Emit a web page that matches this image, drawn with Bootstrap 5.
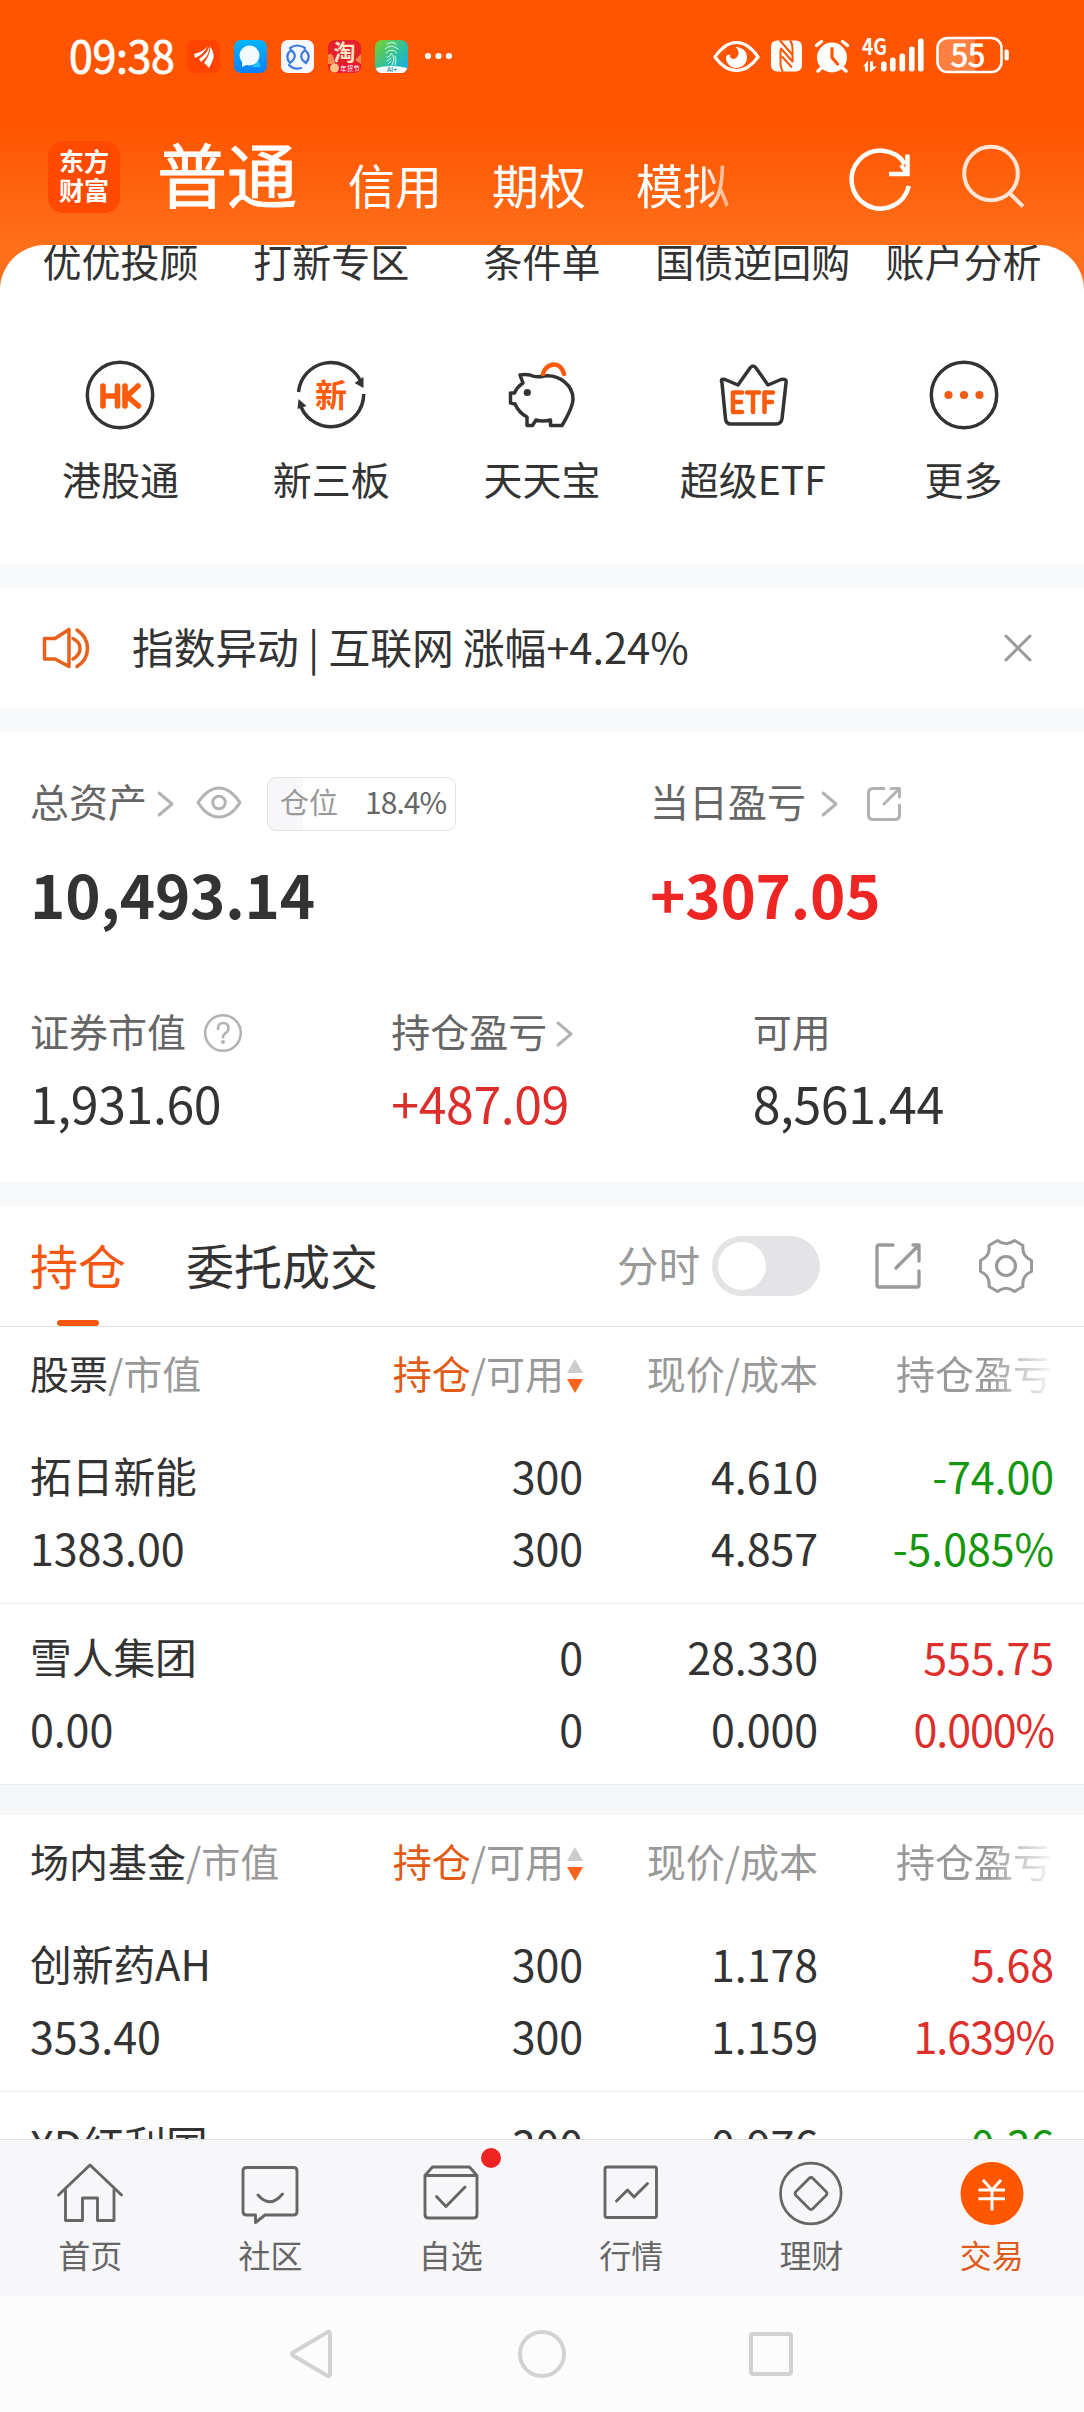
<!DOCTYPE html>
<html lang="zh-CN">
<head>
<meta charset="utf-8">
<meta name="viewport" content="width=device-width, initial-scale=1">
<title>普通交易</title>
<link href="https://cdn.jsdelivr.net/npm/bootstrap@5.3.0/dist/css/bootstrap.min.css" rel="stylesheet">
<style>
:root{--ink:#333;--sub:#666;--mute:#999;--brand:#f6570e;--up:#dc2f2c;--down:#14960f;--gap:#f7f8fa}
body{margin:0;width:1084px;height:2412px;overflow:hidden;background:#fff;color:var(--ink);font-family:"Noto Sans CJK SC",sans-serif;font-size:39px;line-height:1}
svg{display:block;flex:none}
.ln{fill:none;stroke-linecap:round;stroke-linejoin:round}
.top-zone{background:linear-gradient(#ff5500 0,#ff5500 125px,#ff6f1a 245px,#ff701c 300px);height:564px}
.status-bar{height:112px;padding:0 74px 0 69px;color:#fff}
.clock{font-size:43px;-webkit-text-stroke:.8px #fff;line-height:60px;width:118px;margin-top:-4px;letter-spacing:-.4px}
.app-ico{margin-right:14px}
.head-bar{height:133px;padding-left:48px;color:#fff}
.brand-logo{width:72px;height:72px;border-radius:15px;background:#ff4a00;font-size:25px;font-weight:700;line-height:29px;padding-top:5px;margin-top:29px}
.mode-main{font-size:70px;-webkit-text-stroke:.9px #fff;line-height:80px;margin:21px 0 0 37px}
.mode-alt{font-size:47px;line-height:60px;margin:42px 0 0 50px}
.mode-main+.mode-alt{margin-left:51px}
.mode-fade{-webkit-mask-image:linear-gradient(90deg,#000 70%,rgba(0,0,0,.45));mask-image:linear-gradient(90deg,#000 70%,rgba(0,0,0,.45))}
.service-panel{height:319px;border-radius:45px 45px 0 0;padding:0 15px}
.svc{flex:1 1 0;white-space:nowrap}
.svc-name{line-height:40px;height:40px}
.svc-top{margin-top:-5px}
.svc-next{margin-top:78.500px}
.svc-next .svc-name{margin-top:27px}
.gap-bar{height:24px;background:var(--gap)}
.notice{height:120px;padding:0 52px 0 42px;font-size:41.800px}
.notice-text{margin-left:40px;line-height:60px;margin-top:-4px;white-space:pre;letter-spacing:-.1px}
.assets{height:450px;padding-top:40px}
.lab{color:var(--sub);line-height:56px;height:56px}
.pos-pill{width:189px;height:54px;border:1px solid #e4e4e6;border-radius:9px;background:linear-gradient(90deg,#f7f7fa 35px,#fff 35px);font-size:29px;line-height:47px;color:var(--mute);margin-left:24px;padding:0 9px 0 12px}
.pos-pill b{font-weight:400;color:var(--sub);font-size:30px;letter-spacing:-1px}
.big-num{font-size:60px;font-weight:700;line-height:80px;margin-top:25px;letter-spacing:-.2px}
.mid-num{font-size:50px;line-height:70px;margin-top:9px;letter-spacing:-.4px}
.a-left{width:621px;padding-left:30px}
.a-right{padding-left:29px}
.a-col{width:361.33px;padding-left:30px}
.second-line{margin-top:69px}
.up{color:var(--up)}.down{color:var(--down)}.big-up{color:#ef2523}
.tab-bar{height:121px;border-bottom:1px solid #dedfe1;padding:0 51px 0 30px;font-size:48px}
.tab-on{color:var(--brand);height:120px;width:96px}
.tab-on i{display:block;width:42px;height:6px;border-radius:3px;background:var(--brand);margin:26px auto 0}
.tab-txt{line-height:60px;margin-top:28px}
.time-lab{font-size:41.500px;line-height:60px;color:var(--mute);margin-top:-5px}
.toggle{width:108px;height:60px;border-radius:30px;background:#e4e4e6;padding:6px;margin:0 55px 0 12px}
.toggle i{display:block;width:48px;height:48px;border-radius:50%;background:#fff}
.q-grid{display:grid;grid-template-columns:320px 233px 235px 236px;padding:0 30px;white-space:nowrap;align-content:start}
.q-grid>*{text-align:right}
.q-grid>:first-child{text-align:left}
.q-head{height:96px;line-height:91px;color:var(--mute);font-size:39px}
.q-head>:last-child{padding-right:2px}
.q-head em{font-style:normal;color:var(--ink)}
.q-head .hot{color:#e25b16}
.q-fade{-webkit-mask-image:linear-gradient(90deg,#000 72%,rgba(0,0,0,.12) 98%);mask-image:linear-gradient(90deg,#000 72%,rgba(0,0,0,.12) 98%)}
.q-row{height:181px;border-bottom:1px solid #ebecee;padding-top:16px;font-size:43px;line-height:72px;letter-spacing:-.1px}
.q-row .nm{font-size:41.800px}
.pct{letter-spacing:-1.100px}
.fund-list{height:324px;overflow:hidden}
.list-gap{height:30px;background:#f6f7f9}
.tabbar{height:157px;background:#f7f7fa;border-top:1px solid #dfe0e2;font-size:32px;color:var(--sub);padding-right:2px}
.tabbar>div{flex:1 1 0}
.tabbar svg{margin-top:19px}
.tabbar span{line-height:40px;margin-top:7px}
.red-dot{width:20px;height:20px;border-radius:50%;background:#f02323;top:8px;left:120px}
.sys-nav{height:116px;background:#fcfcfc}
</style>
</head>
<body class="d-flex flex-column">

<div class="top-zone flex-shrink-0">
  <div class="status-bar d-flex align-items-center">
    <div class="clock">09:38</div>
    <svg class="app-ico" width="33" height="33" viewBox="0 0 33 33"><rect width="33" height="33" rx="7" fill="#ff4300"/><path fill="#fff" d="M7 14Q16 12 21 6Q16 15 8 18ZM12 19Q20 14 22.500 6Q23 15 14 22ZM17 23Q23 15 23.500 7Q29 15 25 22L22 28Q20 25 17 23Z"/></svg>
    <svg class="app-ico" width="33" height="33" viewBox="0 0 33 33"><defs><linearGradient id="sky" x2="0" y2="1"><stop stop-color="#03b5fb"/><stop offset="1" stop-color="#0880ff"/></linearGradient></defs><rect width="33" height="33" rx="7" fill="url(#sky)"/><path d="M24 20l3 7h-9z" fill="#21c4f5"/><circle cx="15.500" cy="15.500" r="10" fill="#f1faff"/><path d="M8 21v6l6-3z" fill="#f1faff"/></svg>
    <svg class="app-ico" width="33" height="33" viewBox="0 0 33 33"><rect width="33" height="33" rx="7" fill="#f5f8ff"/><g class="ln" stroke="#3c7bdc" stroke-width="2.200"><path d="M9 8Q16 3 24 8M10 10Q18 16 9 23Q3 16 10 10M24 10Q31 16 25 23Q16 17 24 10M8 25Q13 30 20 28"/></g></svg>
    <svg class="app-ico" width="33" height="33" viewBox="0 0 33 33"><rect width="33" height="33" rx="7" fill="#e5202b"/><path d="M0 15q5-5 7 9H0zM27 20l6-6v10z" fill="#f48a4b"/><text x="16.500" y="20" text-anchor="middle" font-size="22" font-weight="700" fill="#ffe3c4">淘</text><path d="M7 24h26v2a7 7 0 0 1-7 7H7z" fill="#ee1733"/><circle cx="6.500" cy="28" r="4.500" fill="#ffc285"/><text x="22" y="31" text-anchor="middle" font-size="6.500" fill="#fff">年货节</text></svg>
    <svg class="app-ico" width="33" height="33" viewBox="0 0 33 33"><defs><linearGradient id="leaf" x2="1" y2="1"><stop stop-color="#7bd229"/><stop offset=".55" stop-color="#2fbfa0"/><stop offset="1" stop-color="#14aaf5"/></linearGradient></defs><rect width="33" height="33" rx="7" fill="url(#leaf)"/><g class="ln" stroke="#d8fff0" stroke-width="1"><path d="M12 4q5-3 9 0M10 9q6-6 13 0M11 13q6-6 11 0M12 17q5-1 4-4q5 5 1 12M20 16q2 5 0 9M12 21l4-3M13 24l3-3"/></g><path d="M1 28Q17 24 32 28Q31 33 26 33H7Q2 33 1 28Z" fill="#fff"/><text x="17" y="32" text-anchor="middle" font-size="6.500" font-weight="700" fill="#399bb0">AI+</text></svg>
    <svg width="30" height="8" viewBox="0 0 30 8" fill="#fff"><circle cx="6" cy="4" r="3.100"/><circle cx="16.500" cy="4" r="3.100"/><circle cx="27" cy="4" r="3.100"/></svg>
    <svg class="ms-auto overflow-visible" width="297" height="40" viewBox="714 36.500 297 40" fill="#fff">
      <path d="M716 57.500Q726 43 737.500 43T759 57.500Q749 71 737.500 71T716 57.500Z" class="ln" stroke="#fff" stroke-width="3"/>
      <path d="M716 57.500Q726 43 737.500 43T759 57.500Q749 71 737.500 71T716 57.500Z" fill="#ff5500"/>
      <path d="M716 57.500Q726 43 737.500 43T759 57.500Q749 71 737.500 71T716 57.500Z" class="ln" stroke="#fff" stroke-width="3"/>
      <path d="M727 57a10.500 10.500 0 1 0 9.500-9.500q5 4 2 9.500q-3 4-6.500 1.500q-1.500-1.500-1-3.500q-3 0-4 2Z"/>
      <rect x="772" y="41" width="31" height="31" rx="6"/><g fill="none" stroke="#ff5500" stroke-width="2"><path d="M781.500 50v13Q781.500 69 784 72M793.500 63V50Q793.500 44 791 41M781 41l13 15M781.500 48.500l12.500 14M783 57l10 11"/></g>
      <circle cx="833" cy="58" r="15"/><g class="ln" stroke="#fff" stroke-width="3.500"><path d="M817.500 46l5-4M848.500 46l-5-4M823 68l-4 3.500M843 68l4 3.500"/></g><path d="M833 49v9l5.500 6.500" class="ln" stroke="#ff5500" stroke-width="3.200"/>
      <text x="863" y="55.500" font-size="22" font-weight="700" textLength="25" lengthAdjust="spacingAndGlyphs">4G</text>
      <path d="M864 67l5-6v11h-3v-5zM871 62h3v5h4l-7 6z"/>
      <rect x="882" y="62" width="5.600" height="10" rx="2.500"/><rect x="891" y="58" width="5.600" height="14" rx="2.500"/><rect x="900.500" y="54" width="5.600" height="18" rx="2.500"/><rect x="910" y="47" width="5.600" height="25" rx="2.500"/><rect x="919" y="39" width="5.600" height="33" rx="2.500"/>
      <path d="M947 38.500h29v33.500h-29q-8 0-8-8v-17.500q0-8 8-8z" opacity=".25"/><rect x="938.500" y="38.500" width="64" height="34" rx="10" fill="none" stroke="#fff" stroke-width="2.600"/><rect x="1005.500" y="50" width="4.300" height="11" rx="2"/>
      <text x="969" y="67" text-anchor="middle" font-size="31" stroke="#fff" stroke-width=".8">55</text>
    </svg>
  </div>
  <div class="head-bar d-flex align-items-start">
    <div class="brand-logo text-center"><div>东方</div><div>财富</div></div>
    <div class="mode-main">普通</div>
    <div class="mode-alt">信用</div>
    <div class="mode-alt">期权</div>
    <div class="mode-alt mode-fade">模拟</div>
    <svg class="ms-auto" style="margin-top:29px" width="238" height="76" viewBox="846 141 238 76"><g fill="none" stroke="#fff"><path d="M908.800 186A29 29 0 1 1 905 164" stroke-width="4.500"/><path d="M907.500 154.500v19.500h-18.500" stroke-width="4.500"/><path d="M907 174l-6-9" stroke-width="4"/><g stroke="#ffe5d6" stroke-width="4"><circle cx="991" cy="173.500" r="26.800"/><path d="M1009.500 193l13.500 13.500"/></g></g></svg>
  </div>
  <div class="service-panel bg-white overflow-hidden">
    <div class="svc-top d-flex text-center">
      <div class="svc svc-name">优优投顾</div><div class="svc svc-name">打新专区</div><div class="svc svc-name">条件单</div><div class="svc svc-name">国债逆回购</div><div class="svc svc-name">账户分析</div>
    </div>
    <div class="svc-next d-flex text-center">
      <div class="svc d-flex flex-column align-items-center">
        <svg width="72" height="72" viewBox="0 0 72 72"><circle cx="36" cy="36" r="32.700" fill="none" stroke="#333" stroke-width="3.500"/><g class="ln" stroke="#fb5b0b" stroke-width="5.600"><path d="M19 27v20M33.500 27v20M19 37h14.500M41 27v20M54 27L43 37l11.500 10"/></g></svg>
        <div class="svc-name">港股通</div></div>
      <div class="svc d-flex flex-column align-items-center">
        <svg width="72" height="72" viewBox="0 0 72 72"><g fill="none" stroke="#333" stroke-width="3.500"><path d="M3.500 33A32.700 32.700 0 0 1 65 21M68.700 35A32.700 32.700 0 0 1 6 48"/></g><path d="M68.500 18v11l-9-5zM2.500 50l1-10 8 7z" fill="#333"/><text x="36" y="47.500" text-anchor="middle" font-size="32" font-weight="700" fill="#fb5b0b">新</text></svg>
        <div class="svc-name">新三板</div></div>
      <div class="svc d-flex flex-column align-items-center">
        <svg width="72" height="72" viewBox="506 358 72 72"><path class="ln" stroke="#333" stroke-width="3.500" d="M530 374Q536 377 544 375C560 373 573 385 573 398Q573 406 562 424.500H550.500V419Q542 421 536 419L532.500 424.500H527V416Q519 412 515 403L510.500 402V392H514.500Q517 386 523 382L520 374Q525 373 530 374Z"/><path d="M543 373c2-10 17-15 21 0" class="ln" stroke="#fb5b0b" stroke-width="4.600"/><circle cx="527.300" cy="391.500" r="3.600" fill="#333"/></svg>
        <div class="svc-name">天天宝</div></div>
      <div class="svc d-flex flex-column align-items-center">
        <svg width="72" height="72" viewBox="717 358 72 72"><path class="ln" stroke="#333" stroke-width="3.500" d="M722 382Q720 377 725 378.500L738 384L750 367Q753 363 756 367L768 384L781 378.500Q787 377 786 382L782 418Q781 423 776 423H731Q726 423 725.500 418Z"/><g class="ln" stroke="#fb5b0b" stroke-width="4.500"><path d="M742 391.500h-9v19.500h9M733 401h8M747 391.500h12M753 391.500v19.500M773 391.500h-8.500v19.500M764.500 401h7.500"/></g></svg>
        <div class="svc-name">超级ETF</div></div>
      <div class="svc d-flex flex-column align-items-center">
        <svg width="72" height="72" viewBox="0 0 72 72"><circle cx="36" cy="36" r="32.700" fill="none" stroke="#333" stroke-width="3.500"/><g fill="#f25c13"><circle cx="20.500" cy="36" r="4.100"/><circle cx="36" cy="36" r="4.100"/><circle cx="51.500" cy="36" r="4.100"/></g></svg>
        <div class="svc-name">更多</div></div>
    </div>
  </div>
</div>

<div class="gap-bar flex-shrink-0"></div>
<div class="notice d-flex align-items-center flex-shrink-0">
  <svg width="50" height="46" viewBox="42 625 50 46"><g class="ln" stroke="#e8611c" stroke-width="3.500"><path d="M44.500 638.500H55L69 629.500V666.500L55 659H44.500ZM73 638.500q7 3.500 7 10t-7 10.500M77 630q10.500 7 10.500 18.500t-10.500 18"/></g></svg>
  <div class="notice-text">指数异动 | 互联网 涨幅+4.24%</div>
  <svg class="ms-auto" width="28" height="28" viewBox="0 0 28 28"><path d="M2 2l24 24M26 2L2 26" class="ln" stroke="#999" stroke-width="3"/></svg>
</div>
<div class="gap-bar flex-shrink-0"></div>

<div class="assets flex-shrink-0">
  <div class="d-flex">
    <div class="a-left">
      <div class="lab d-flex align-items-center">
        <span>总资产</span>
        <svg width="20" height="28" viewBox="0 0 20 28" style="margin:7px 0 0 9px"><path d="M3 3l13 11L3 25" class="ln" stroke="#b3b3b3" stroke-width="3"/></svg>
        <svg width="48" height="36" viewBox="0 0 48 36" style="margin:5px 0 0 19px"><path d="M3 17.500Q13 3 24 3T45 17.500Q36 32 24 32T3 17.500Z" class="ln" stroke="#b3b3b3" stroke-width="3"/><circle cx="24" cy="17.500" r="6.300" class="ln" stroke="#b3b3b3" stroke-width="3"/></svg>
        <div class="pos-pill d-flex justify-content-between" style="margin-top:8px"><span>仓位</span><b>18.4%</b></div>
      </div>
      <div class="big-num">10,493.14</div>
    </div>
    <div class="a-right">
      <div class="lab d-flex align-items-center">
        <span>当日盈亏</span>
        <svg width="20" height="28" viewBox="0 0 20 28" style="margin:7px 0 0 14px"><path d="M3 3l13 11L3 25" class="ln" stroke="#b3b3b3" stroke-width="3"/></svg>
        <svg width="38" height="38" viewBox="0 0 38 38" style="margin:8px 0 0 25px"><g class="ln" stroke="#b3b3b3" stroke-width="3"><path d="M19 3.500H8Q3.500 3.500 3.500 8V30Q3.500 34.500 8 34.500H30Q34.500 34.500 34.500 30V20M26 3.500h8.500V12M34 4L19 19"/></g></svg>
      </div>
      <div class="big-num big-up">+307.05</div>
    </div>
  </div>
  <div class="second-line d-flex">
    <div class="a-col"><div class="lab d-flex align-items-center"><span>证券市值</span><svg width="40" height="40" viewBox="0 0 40 40" style="margin:6px 0 0 17px"><circle cx="20" cy="20" r="17.800" fill="none" stroke="#b3b3b3" stroke-width="2.600"/><path d="M15 16q0-6 5.300-6t5.200 5.500q0 3-3.500 5Q20 22 20 24.500" class="ln" stroke="#b3b3b3" stroke-width="2.600"/><circle cx="20" cy="29" r="2" fill="#b3b3b3"/></svg></div><div class="mid-num">1,931.60</div></div>
    <div class="a-col"><div class="lab d-flex align-items-center"><span>持仓盈亏</span><svg width="20" height="28" viewBox="0 0 20 28" style="margin:7px 0 0 8px"><path d="M3 3l13 11L3 25" class="ln" stroke="#b3b3b3" stroke-width="3"/></svg></div><div class="mid-num up">+487.09</div></div>
    <div class="a-col"><div class="lab">可用</div><div class="mid-num">8,561.44</div></div>
  </div>
</div>
<div class="gap-bar flex-shrink-0"></div>

<div class="tab-bar d-flex align-items-center flex-shrink-0">
  <div class="tab-on"><div class="tab-txt">持仓</div><i></i></div>
  <div class="tab-txt align-self-start" style="margin-left:60px">委托成交</div>
  <div class="time-lab ms-auto">分时</div>
  <div class="toggle"><i></i></div>
  <svg width="46" height="46" viewBox="0 0 46 46"><g class="ln" stroke="#999" stroke-width="3.300"><path d="M18 2H4Q2 2 2 4V42Q2 44 4 44H42Q44 44 44 42V28M38 2H44V18M43 3L21 25"/></g></svg>
  <svg width="54" height="54" viewBox="-27 -27 54 54" style="margin-left:58px"><path class="ln" stroke="#999" stroke-width="3" d="M-8.500-25.500Q0-19 8.500-25.500L17-20.500Q15.500-10 25.500-5.500V5.500Q15.500 10 17 20.500L8.500 25.500Q0 19-8.500 25.500L-17 20.500Q-15.500 10-25.500 5.500V-5.500Q-15.500-10-17-20.500Z"/><circle r="9.500" fill="none" stroke="#999" stroke-width="3.200"/></svg>
</div>

<div class="flex-shrink-0">
  <div class="q-grid q-head"><div><em>股票</em>/市值</div><div class="d-flex justify-content-end align-items-center"><em class="hot">持仓</em>/可用<svg width="16" height="34" viewBox="0 0 16 34" style="margin:7px 0 0 3px"><path d="M8 0l8 14H0z" fill="#ccc"/><path d="M8 34L0 20h16z" fill="#f8631a"/></svg></div><div>现价/成本</div><div class="q-fade">持仓盈亏</div></div>
  <div class="q-grid q-row"><div class="nm">拓日新能</div><div>300</div><div>4.610</div><div class="down">-74.00</div><div class="text-start">1383.00</div><div>300</div><div>4.857</div><div class="down">-5.085%</div></div>
  <div class="q-grid q-row"><div class="nm">雪人集团</div><div>0</div><div>28.330</div><div class="up">555.75</div><div class="text-start">0.00</div><div>0</div><div>0.000</div><div class="up pct">0.000%</div></div>
</div>
<div class="list-gap flex-shrink-0"></div>
<div class="fund-list flex-shrink-0">
  <div class="q-grid q-head"><div><em>场内基金</em>/市值</div><div class="d-flex justify-content-end align-items-center"><em class="hot">持仓</em>/可用<svg width="16" height="34" viewBox="0 0 16 34" style="margin:7px 0 0 3px"><path d="M8 0l8 14H0z" fill="#ccc"/><path d="M8 34L0 20h16z" fill="#f8631a"/></svg></div><div>现价/成本</div><div class="q-fade">持仓盈亏</div></div>
  <div class="q-grid q-row"><div class="nm">创新药AH</div><div>300</div><div>1.178</div><div class="up">5.68</div><div class="text-start">353.40</div><div>300</div><div>1.159</div><div class="up pct">1.639%</div></div>
  <div class="q-grid q-row"><div class="nm">XD红利国</div><div>300</div><div>0.976</div><div class="down">-0.36</div></div>
</div>

<div class="tabbar d-flex text-center flex-shrink-0">
  <div class="d-flex flex-column align-items-center"><svg width="68" height="68" viewBox="56 2159 68 68"><g class="ln" stroke="#666" stroke-width="2.900"><path d="M58.500 2195L90 2165l31.500 30M65.500 2190v30.500h17V2198h15v22.500h16.500V2190"/></g></svg><span>首页</span></div>
  <div class="d-flex flex-column align-items-center"><svg width="68" height="68" viewBox="235.500 2159 68 68"><g class="ln" stroke="#666" stroke-width="2.900"><path d="M246 2167.500H293Q296.500 2167.500 296.500 2171V2211.500Q296.500 2215 293 2215H264.500L255 2222.500V2215H246Q242.500 2215 242.500 2211.500V2171Q242.500 2167.500 246 2167.500ZM257.500 2195q12 14 24.500-1"/></g></svg><span>社区</span></div>
  <div class="d-flex flex-column align-items-center position-relative"><svg width="68" height="68" viewBox="416.500 2159 68 68"><g class="ln" stroke="#666" stroke-width="2.900"><path d="M424.500 2175.500L432 2167H469L476.500 2175.500V2214.500Q476.500 2218 473 2218H428Q424.500 2218 424.500 2214.500ZM424.500 2175.500H476.500M436 2196.500l9.500 10L464.500 2187"/></g></svg><span>自选</span><i class="red-dot position-absolute"></i></div>
  <div class="d-flex flex-column align-items-center"><svg width="68" height="68" viewBox="597.500 2159 68 68"><g class="ln" stroke="#666" stroke-width="2.900"><rect x="605.500" y="2167" width="51.500" height="50.500" rx="2"/><path d="M617 2201l11-11 6.500 7L648 2183.500"/></g></svg><span>行情</span></div>
  <div class="d-flex flex-column align-items-center"><svg width="68" height="68" viewBox="778.500 2159 68 68"><g class="ln" stroke="#666" stroke-width="2.700"><circle cx="812.300" cy="2193.500" r="30.300"/><path d="M810.500 2178.500q2-2 4 0l13 13q2 2 0 4l-13 13q-2 2-4 0l-13-13q-2-2 0-4z"/></g></svg><span>理财</span></div>
  <div class="d-flex flex-column align-items-center"><svg width="68" height="68" viewBox="959.500 2159 68 68"><circle cx="993.500" cy="2193.500" r="31.500" fill="#ff5600"/><path d="M984.500 2180l9 10 9-10M993.500 2190v20.500M980 2190h26.500M980 2198.700h26.500" fill="none" stroke="#fff" stroke-width="3"/></svg><span style="color:#dd5c1d">交易</span></div>
</div>
<div class="sys-nav d-flex justify-content-center flex-shrink-0"><svg width="508" height="116" viewBox="288 2296 508 116"><g class="ln" stroke="#d2d2d2" stroke-width="4"><path d="M327 2332.500q3-2 3 1.500v40q0 3.500-3 1.500L293 2355.500q-2.500-1.500 0-3z"/><circle cx="542" cy="2354" r="22"/><rect x="751" y="2334" width="40" height="40" rx="2"/></g></svg></div>

<script src="https://cdn.jsdelivr.net/npm/bootstrap@5.3.0/dist/js/bootstrap.bundle.min.js"></script>
</body>
</html>
